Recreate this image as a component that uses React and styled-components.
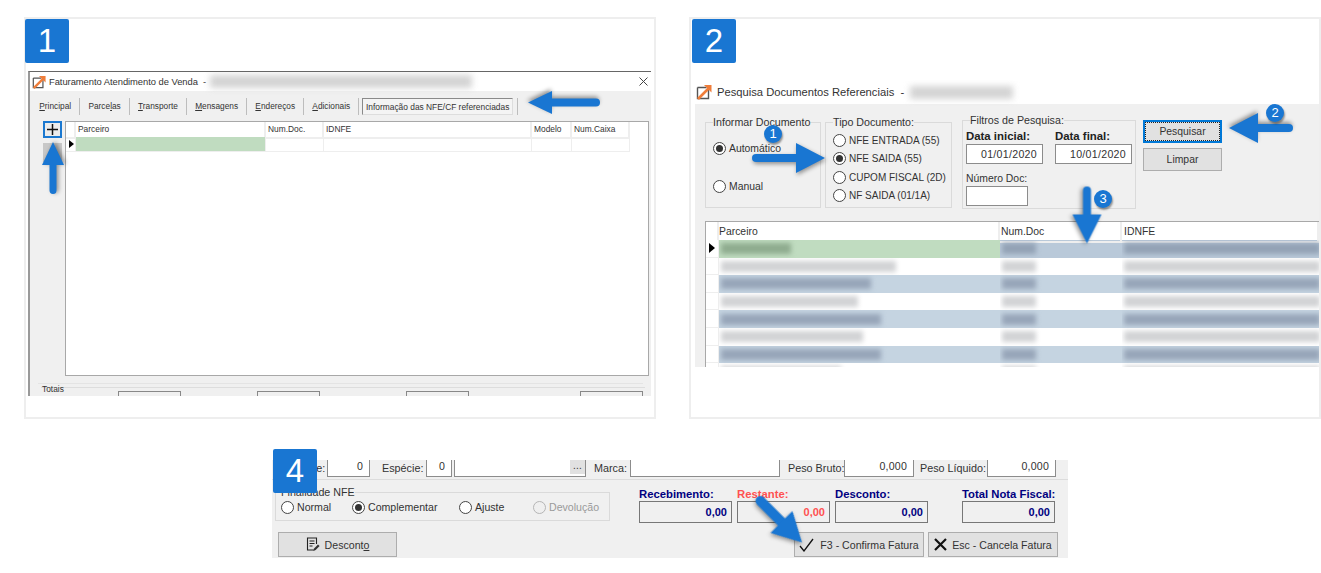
import React from "react";
import styled, { createGlobalStyle } from "styled-components";

const BLUE = "#1976d2";
const PANEL = "#f0f0f0";

const GlobalStyle = createGlobalStyle`
  html, body { margin: 0; padding: 0; background: #fff; }
  body { font-family: "Liberation Sans", Arial, sans-serif; color: #222; overflow: hidden; }
`;

const Page = styled.div`
  position: relative;
  width: 1321px;
  height: 573px;
  overflow: hidden;
  padding: 17px 0 0 24px;
  box-sizing: border-box;
`;

const TopRow = styled.div`
  display: flex;
  gap: 33px;
`;

const Panel = styled.section`
  position: relative;
  box-sizing: border-box;
  width: ${(p) => p.$width}px;
  height: 402px;
  border: 2px solid #eeeeee;
  padding-top: ${(p) => p.$top}px;
  padding-left: ${(p) => p.$left}px;
`;

const Badge = styled.div`
  position: absolute;
  left: ${(p) => p.$x}px;
  top: ${(p) => p.$y}px;
  width: 44px;
  height: 44px;
  background: ${BLUE};
  border-radius: 2px;
  color: #fff;
  font-size: 33px;
  line-height: 44px;
  text-align: center;
  z-index: 3;
`;

const Screen = styled.div`
  box-sizing: border-box;
  width: ${(p) => p.$w}px;
  height: ${(p) => p.$h}px;
  overflow: hidden;
  background: ${PANEL};
  border-top: ${(p) => (p.$framed ? "1px solid #666" : "0")};
  border-left: ${(p) => (p.$framed ? "2px solid #999" : "0")};
`;

const TitleBar = styled.div`
  display: flex;
  align-items: center;
  height: ${(p) => p.$h}px;
  background: #fff;
  padding-left: ${(p) => p.$pad}px;
  gap: ${(p) => p.$gap}px;
  font-size: ${(p) => p.$size}px;
  letter-spacing: ${(p) => p.$track || 0}px;
  color: #333;
  white-space: nowrap;
`;

const BlurTitle = styled.div`
  width: ${(p) => p.$w}px;
  height: 13px;
  margin-left: 1px;
  background: #d4d4d4;
  filter: blur(3px);
`;

const CloseMark = styled.svg`
  margin-left: auto;
  margin-right: 3px;
  width: 9px;
  height: 9px;
`;

const Tabs = styled.div`
  display: flex;
  align-items: center;
  height: 30px;
  padding: 0 0 0 1px;
`;

const Tab = styled.div`
  height: 17px;
  padding: 0 8px 0 8.3px;
  line-height: 17px;
  font-size: 8.3px;
  color: #333;
  border-right: 1px solid #bdbdbd;
  white-space: nowrap;
  u { text-decoration: underline; }
`;

const ActiveTab = styled.div`
  box-sizing: border-box;
  height: 17px;
  width: 151px;
  margin-left: 3px;
  margin-right: 4px;
  border: 1px solid #8a8a8a;
  border-right-color: #ddd;
  border-bottom-color: #ddd;
  background: #f4f4f4;
  font-size: 8.4px;
  line-height: 16px;
  text-align: center;
  color: #333;
  white-space: nowrap;
`;

const TabEnd = styled.div`
  width: 1px;
  height: 17px;
  background: #bdbdbd;
`;

const WindowBody = styled.div`
  display: flex;
  align-items: flex-start;
  padding-left: 13px;
`;

const ToolColumn = styled.div`
  display: flex;
  flex-direction: column;
  gap: 5px;
  width: 19px;
  margin-right: 3px;
`;

const PlusButton = styled.div`
  box-sizing: border-box;
  height: 17px;
  border: 2px solid #1b78d0;
  background: #ececec;
  display: flex;
  align-items: center;
  justify-content: center;
`;

const GreyTool = styled.div`
  height: 19px;
  background: #c8c8c8;
`;

const TableFrame = styled.div`
  box-sizing: border-box;
  width: ${(p) => p.$w}px;
  height: ${(p) => p.$h}px;
  background: #fff;
  border: 1px solid #a8a8a8;
  border-width: ${(p) => p.$borders || "1px"};
  overflow: hidden;
`;

const DataRow = styled.div`
  display: grid;
  grid-template-columns: ${(p) => p.$cols};
  height: ${(p) => p.$h}px;
  background: ${(p) => p.$bg || "#fff"};
`;

const HeadCell = styled.div`
  font-size: ${(p) => p.$size}px;
  line-height: ${(p) => p.$line}px;
  padding-left: ${(p) => p.$pad}px;
  color: #333;
  white-space: nowrap;
  border-right: 2px solid #eeeeee;
  border-bottom: 2px solid #eeeeee;
`;

const Cell = styled.div`
  box-sizing: border-box;
  display: flex;
  align-items: center;
  background: ${(p) => p.$bg || "transparent"};
  border-right: ${(p) => (p.$plain ? "0" : "1px solid #eeeeee")};
  border-bottom: ${(p) => (p.$plain ? "0" : "1px solid #eeeeee")};
  overflow: hidden;
`;

const Marker = styled.div`
  width: 0;
  height: 0;
  margin-left: ${(p) => p.$left}px;
  border-top: ${(p) => p.$high / 2}px solid transparent;
  border-bottom: ${(p) => p.$high / 2}px solid transparent;
  border-left: ${(p) => p.$wide}px solid #000;
`;

const Smudge = styled.div`
  width: ${(p) => p.$w}px;
  height: 11px;
  flex: none;
  margin-left: 2px;
  background: ${(p) => p.$color};
  filter: blur(2.5px);
`;

const Rule = styled.div`
  height: 1px;
  margin: ${(p) => p.$margin};
  background: #e4e4e4;
`;

const TotalsGroup = styled.div`
  margin: 3px 6px 0 11px;
  border-top: 1px solid #ddd;
`;

const TotalsLegend = styled.div`
  font-size: 8.4px;
  line-height: 10px;
  margin-top: -4px;
  padding-left: 1px;
  color: #333;
`;

const TotalsBoxes = styled.div`
  display: flex;
  margin-top: -3px;
`;

const TotalsBox = styled.div`
  box-sizing: border-box;
  width: 63px;
  height: 12px;
  margin-left: ${(p) => p.$gap}px;
  border: 1px solid #888;
`;

const TitleIcon = ({ size }) => (
  <svg width={size} height={size} viewBox="0 0 16 16">
    <path d="M1.5 3.5h9M1.5 3.5v11h11v-9" fill="none" stroke="#555" strokeWidth="1.4" />
    <path d="M2 15L14 3" stroke="#ef7d3a" strokeWidth="2.6" />
    <path d="M8 1h7.5v7.5z" fill="#ef7d3a" />
  </svg>
);

const SearchForm = styled.div`
  display: flex;
  align-items: flex-start;
  height: 117px;
  padding: 12px 0 0 10px;
  box-sizing: border-box;
`;

const Group = styled.fieldset`
  box-sizing: border-box;
  margin: ${(p) => p.$margin || "0"};
  width: ${(p) => p.$w}px;
  height: ${(p) => p.$h}px;
  padding: 0 0 0 7px;
  border: 1px solid #dadada;
  min-width: 0;
`;

const Legend = styled.legend`
  padding: 0;
  font-size: 10.7px;
  line-height: 12px;
  color: #333;
  white-space: nowrap;
`;

const RadioStack = styled.div`
  display: flex;
  flex-direction: column;
  gap: ${(p) => p.$gap}px;
  padding-top: ${(p) => p.$top}px;
`;

const RadioRow = styled.label`
  display: flex;
  align-items: center;
  gap: 3px;
  height: 13px;
  font-size: ${(p) => p.$size || 10.4}px;
  line-height: 13px;
  color: ${(p) => (p.$off ? "#9a9a9a" : "#333")};
  white-space: nowrap;
`;

const RadioDot = styled.span`
  box-sizing: border-box;
  flex: none;
  width: 13px;
  height: 13px;
  border-radius: 50%;
  border: 1px solid ${(p) => (p.$off ? "#b5b5b5" : "#444")};
  background: ${(p) => (p.$off ? "#efefef" : "#fff")};
  display: flex;
  align-items: center;
  justify-content: center;
  &::after {
    content: "";
    display: ${(p) => (p.$on ? "block" : "none")};
    width: 7px;
    height: 7px;
    border-radius: 50%;
    background: #333;
  }
`;

const FilterGrid = styled.div`
  display: grid;
  grid-template-columns: 77px 77px;
  column-gap: 12px;
  margin-left: -4px;
  margin-top: 4px;
`;

const FieldLabel = styled.div`
  font-size: ${(p) => (p.$bold ? 11.4 : 10.4)}px;
  font-weight: ${(p) => (p.$bold ? 700 : 400)};
  line-height: 13px;
  color: ${(p) => (p.$bold ? "#222" : "#333")};
  margin-top: ${(p) => p.$top || 0}px;
  margin-bottom: 1px;
  white-space: nowrap;
`;

const DateInput = styled.div`
  box-sizing: border-box;
  width: ${(p) => p.$w}px;
  height: ${(p) => p.$h}px;
  background: #fff;
  border: 1px solid #8c8c8c;
  padding-right: 5px;
  font-size: 10.6px;
  line-height: 18px;
  letter-spacing: 0.3px;
  text-align: right;
  color: #333;
`;

const NumberField = styled.div`
  grid-column: 1 / span 2;
`;

const ButtonColumn = styled.div`
  display: flex;
  flex-direction: column;
  gap: 5px;
  margin-left: 7px;
  margin-top: 4px;
`;

const WinButton = styled.div`
  box-sizing: border-box;
  width: ${(p) => p.$w}px;
  height: ${(p) => p.$h}px;
  display: flex;
  align-items: center;
  justify-content: center;
  gap: ${(p) => p.$gap || 0}px;
  background: #e1e1e1;
  border: ${(p) => (p.$focus ? `2px solid #0078d7` : "1px solid #adadad")};
  outline: ${(p) => (p.$focus ? "1px dotted #222" : "none")};
  outline-offset: -3px;
  font-size: ${(p) => p.$size || 10.4}px;
  color: #333;
  white-space: nowrap;
  flex: none;
`;

const GridWrap = styled.div`
  margin-left: 10px;
`;

const Strip = styled.section`
  position: relative;
  box-sizing: border-box;
  width: 796px;
  height: 98px;
  margin: 41px 0 0 248px;
  background: ${PANEL};
  overflow: hidden;
`;

const FieldRow = styled.div`
  display: flex;
  align-items: flex-start;
  height: 19px;
  padding-left: 25px;
  border-bottom: 1px solid #dcdcdc;
  color: #333;
`;

const ClipInput = styled.div`
  box-sizing: border-box;
  position: relative;
  width: ${(p) => p.$w}px;
  height: 17px;
  flex: none;
  margin-left: ${(p) => p.$left || 0}px;
  background: #fff;
  border: 1px solid #8c8c8c;
  border-top: 0;
  padding-right: ${(p) => p.$pad || 6}px;
  font-size: 10.6px;
  line-height: 12px;
  text-align: right;
  letter-spacing: 0.2px;
`;

const EllipsisButton = styled.div`
  position: absolute;
  right: 0;
  top: 0;
  width: 15px;
  height: 14px;
  background: #e1e1e1;
  font-size: 10px;
  line-height: 12px;
  text-align: center;
`;

const FieldText = styled.div`
  flex: none;
  width: ${(p) => p.$w}px;
  margin-left: ${(p) => p.$left || 0}px;
  line-height: 17px;
  white-space: nowrap;
  font-size: 10.8px;
`;

const MidRow = styled.div`
  display: flex;
  align-items: flex-start;
  padding: 6px 0 0 3px;
  height: 51px;
  box-sizing: border-box;
`;

const NfeGroup = styled.fieldset`
  box-sizing: border-box;
  width: 335px;
  height: 35px;
  margin: 0;
  padding: 3px 0 0 5px;
  border: 1px solid #dadada;
  min-width: 0;
  display: block;
`;

const RadioLine = styled.div`
  display: flex;
  align-items: center;
`;

const NfeOption = styled.div`
  width: ${(p) => p.$w}px;
`;

const Totals = styled.div`
  display: flex;
  align-items: flex-start;
  gap: 5px;
  margin-left: 29px;
  padding-top: 2px;
`;

const TotalColumn = styled.div`
  display: flex;
  flex-direction: column;
  margin-left: ${(p) => p.$left || 0}px;
  width: 93px;
`;

const TotalLabel = styled.div`
  font-size: 11.3px;
  font-weight: 700;
  line-height: 13px;
  color: ${(p) => (p.$red ? "#ff5050" : "#000080")};
  white-space: nowrap;
`;

const TotalValue = styled.div`
  box-sizing: border-box;
  height: 22px;
  border: 1px solid #777;
  padding-right: 4px;
  font-size: 11px;
  font-weight: 700;
  line-height: 20px;
  text-align: right;
  color: ${(p) => (p.$red ? "#ff5050" : "#000080")};
`;

const ActionRow = styled.div`
  display: flex;
  padding: 1px 10px 0 6px;
  gap: 4px;
`;

const PushRight = styled.div`
  margin-left: auto;
`;

const ArrowShape = styled.svg`
  position: absolute;
  left: ${(p) => p.$x}px;
  top: ${(p) => p.$y}px;
  transform-origin: 0 50%;
  transform: rotate(${(p) => p.$angle}deg);
  overflow: visible;
  z-index: 4;
  filter: drop-shadow(1px 2px 2px rgba(0, 0, 0, 0.4));
`;

const Arrow = ({ from, to, head, wide, thick }) => {
  const dx = to[0] - from[0];
  const dy = to[1] - from[1];
  const len = Math.hypot(dx, dy);
  const angle = (Math.atan2(dy, dx) * 180) / Math.PI;
  const mid = wide / 2;
  return (
    <ArrowShape
      $x={from[0]}
      $y={from[1] - mid}
      $angle={angle}
      width={len}
      height={wide}
      viewBox={`0 0 ${len} ${wide}`}
    >
      <path d={`M${thick / 2} ${mid}H${len - head}`} stroke={BLUE} strokeWidth={thick} strokeLinecap="round" />
      <path d={`M${len - head} 0L${len} ${mid}L${len - head} ${wide}z`} fill={BLUE} />
    </ArrowShape>
  );
};

const Step = styled.div`
  position: absolute;
  left: ${(p) => p.$x - 9}px;
  top: ${(p) => p.$y - 9}px;
  width: 18px;
  height: 18px;
  border-radius: 50%;
  background: ${BLUE};
  color: #fff;
  font-size: 13px;
  line-height: 18px;
  text-align: center;
  z-index: 5;
  box-shadow: 1px 2px 2px rgba(0, 0, 0, 0.4);
`;

const topCols = "10px 190px 58px 208px 40px 58px";
const searchCols = "13px 281px 122px 1fr";

const searchRows = [
  { bg: "#b9c9d9", first: "#c0dcc0", ink: "#93a2b5", firstInk: "#8fac8f", w: 70 },
  { bg: "#ffffff", ink: "#d2d3d5", w: 175 },
  { bg: "#c5d4e1", ink: "#97a5b9", w: 150 },
  { bg: "#ffffff", ink: "#d2d3d5", w: 137 },
  { bg: "#c5d4e1", ink: "#97a5b9", w: 160 },
  { bg: "#ffffff", ink: "#d2d3d5", w: 142 },
  { bg: "#c5d4e1", ink: "#97a5b9", w: 160 },
  { bg: "#ffffff", ink: "#d2d3d5", w: 120 },
];

const Radio = ({ label, on, off, size }) => (
  <RadioRow $off={off} $size={size}>
    <RadioDot $on={on} $off={off} />
    {label}
  </RadioRow>
);

export default function App() {
  return (
    <Page>
      <GlobalStyle />
      <TopRow>
        <Panel $width={632} $top={52} $left={2}>
          <Badge $x={-1} $y={0}>1</Badge>
          <Screen $w={623} $h={325} $framed>
            <TitleBar $h={19} $pad={2} $gap={3} $size={9.4} $track={-0.04}>
              <TitleIcon size={14} />
              <span>Faturamento Atendimento de Venda&nbsp; -</span>
              <BlurTitle $w={262} />
              <CloseMark viewBox="0 0 9 9">
                <path d="M0.5 0.5L8.5 8.5M8.5 0.5L0.5 8.5" stroke="#444" strokeWidth="1" />
              </CloseMark>
            </TitleBar>
            <Tabs>
              <Tab><u>P</u>rincipal</Tab>
              <Tab>Parce<u>l</u>as</Tab>
              <Tab><u>T</u>ransporte</Tab>
              <Tab><u>M</u>ensagens</Tab>
              <Tab><u>E</u>ndereços</Tab>
              <Tab><u>A</u>dicionais</Tab>
              <ActiveTab>Informação das NFE/CF referenciadas</ActiveTab>
              <TabEnd />
            </Tabs>
            <WindowBody>
              <ToolColumn>
                <PlusButton>
                  <svg width="11" height="11" viewBox="0 0 11 11">
                    <path d="M5.5 0V11M0 5.5H11" stroke="#111" strokeWidth="1.5" />
                  </svg>
                </PlusButton>
                <GreyTool />
              </ToolColumn>
              <TableFrame $w={584} $h={255}>
                <DataRow $cols={topCols} $h={15}>
                  <HeadCell $size={8.4} $line={15} $pad={2} />
                  <HeadCell $size={8.4} $line={15} $pad={2}>Parceiro</HeadCell>
                  <HeadCell $size={8.4} $line={15} $pad={2}>Num.Doc.</HeadCell>
                  <HeadCell $size={8.4} $line={15} $pad={2}>IDNFE</HeadCell>
                  <HeadCell $size={8.4} $line={15} $pad={2}>Modelo</HeadCell>
                  <HeadCell $size={8.4} $line={15} $pad={2}>Num.Caixa</HeadCell>
                </DataRow>
                <DataRow $cols={topCols} $h={15}>
                  <Cell><Marker $left={3} $wide={5} $high={9} /></Cell>
                  <Cell $bg="#c0dcc0" />
                  <Cell />
                  <Cell />
                  <Cell />
                  <Cell />
                </DataRow>
              </TableFrame>
            </WindowBody>
            <Rule $margin="7px 8px 0 8px" />
            <TotalsGroup>
              <TotalsLegend>Totais</TotalsLegend>
              <TotalsBoxes>
                <TotalsBox $gap={77} />
                <TotalsBox $gap={76} />
                <TotalsBox $gap={86} />
                <TotalsBox $gap={111} />
              </TotalsBoxes>
            </TotalsGroup>
          </Screen>
        </Panel>

        <Panel $width={632} $top={61} $left={4}>
          <Badge $x={1} $y={0}>2</Badge>
          <Screen $w={624} $h={287}>
            <TitleBar $h={24} $pad={1} $gap={5} $size={11.2}>
              <TitleIcon size={16} />
              <span>Pesquisa Documentos Referenciais&nbsp; -</span>
              <BlurTitle $w={103} />
            </TitleBar>
            <SearchForm>
              <Group $w={116} $h={92}>
                <Legend>Informar Documento</Legend>
                <RadioStack $gap={25} $top={14}>
                  <Radio label="Automático" on />
                  <Radio label="Manual" />
                </RadioStack>
              </Group>
              <Group $w={127} $h={92} $margin="0 0 0 4px">
                <Legend>Tipo Documento:</Legend>
                <RadioStack $gap={5.3} $top={6}>
                  <Radio label="NFE ENTRADA (55)" size={10} />
                  <Radio label="NFE SAIDA (55)" on size={10} />
                  <Radio label="CUPOM FISCAL (2D)" size={10} />
                  <Radio label="NF SAIDA (01/1A)" size={10} />
                </RadioStack>
              </Group>
              <Group $w={174} $h={95} $margin="-2px 0 0 10px">
                <Legend>Filtros de Pesquisa:</Legend>
                <FilterGrid>
                  <div>
                    <FieldLabel $bold>Data inicial:</FieldLabel>
                    <DateInput $w={77} $h={20}>01/01/2020</DateInput>
                  </div>
                  <div>
                    <FieldLabel $bold>Data final:</FieldLabel>
                    <DateInput $w={77} $h={20}>10/01/2020</DateInput>
                  </div>
                  <NumberField>
                    <FieldLabel $top={8}>Número Doc:</FieldLabel>
                    <DateInput $w={62} $h={20} />
                  </NumberField>
                </FilterGrid>
              </Group>
              <ButtonColumn>
                <WinButton $w={79} $h={23} $focus>Pesquisar</WinButton>
                <WinButton $w={79} $h={23}>Limpar</WinButton>
              </ButtonColumn>
            </SearchForm>
            <GridWrap>
              <TableFrame $w={614} $h={146} $borders="1px 0 0 1px">
                <DataRow $cols={searchCols} $h={18}>
                  <HeadCell $size={10.4} $line={19} $pad={0} />
                  <HeadCell $size={10.4} $line={19} $pad={0}>Parceiro</HeadCell>
                  <HeadCell $size={10.4} $line={19} $pad={1}>Num.Doc</HeadCell>
                  <HeadCell $size={10.4} $line={19} $pad={2}>IDNFE</HeadCell>
                </DataRow>
                {searchRows.map((row, i) => (
                  <DataRow key={i} $cols={searchCols} $h={17.6} $bg={row.bg}>
                    <Cell $bg="#fff">{i === 0 && <Marker $left={3} $wide={6} $high={11} />}</Cell>
                    <Cell $plain $bg={row.first}>
                      <Smudge $w={row.w} $color={row.firstInk || row.ink} />
                    </Cell>
                    <Cell $plain>
                      <Smudge $w={34} $color={row.ink} />
                    </Cell>
                    <Cell $plain>
                      <Smudge $w={196} $color={row.ink} />
                    </Cell>
                  </DataRow>
                ))}
              </TableFrame>
            </GridWrap>
          </Screen>
        </Panel>
      </TopRow>

      <Strip>
        <FieldRow>
          <FieldText $w={30}>Série:</FieldText>
          <ClipInput $w={43}>0</ClipInput>
          <FieldText $left={12} $w={41}>Espécie:</FieldText>
          <ClipInput $w={26} $left={3} $pad={6}>0</ClipInput>
          <ClipInput $w={132} $left={2}>
            <EllipsisButton>...</EllipsisButton>
          </ClipInput>
          <FieldText $left={8} $w={33}>Marca:</FieldText>
          <ClipInput $w={150} $left={3} />
          <FieldText $left={8} $w={56}>Peso Bruto:</FieldText>
          <ClipInput $w={70}>0,000</ClipInput>
          <FieldText $left={6} $w={64}>Peso Líquido:</FieldText>
          <ClipInput $w={69} $left={3}>0,000</ClipInput>
        </FieldRow>
        <MidRow>
          <NfeGroup>
            <Legend>Finalidade NFE</Legend>
            <RadioLine>
              <NfeOption $w={71}><Radio label="Normal" size={10.6} /></NfeOption>
              <NfeOption $w={107}><Radio label="Complementar" on size={10.6} /></NfeOption>
              <NfeOption $w={74}><Radio label="Ajuste" size={10.6} /></NfeOption>
              <NfeOption $w={75}><Radio label="Devolução" off size={10.6} /></NfeOption>
            </RadioLine>
          </NfeGroup>
          <Totals>
            <TotalColumn>
              <TotalLabel>Recebimento:</TotalLabel>
              <TotalValue>0,00</TotalValue>
            </TotalColumn>
            <TotalColumn>
              <TotalLabel $red>Restante:</TotalLabel>
              <TotalValue $red>0,00</TotalValue>
            </TotalColumn>
            <TotalColumn>
              <TotalLabel>Desconto:</TotalLabel>
              <TotalValue>0,00</TotalValue>
            </TotalColumn>
            <TotalColumn $left={29}>
              <TotalLabel>Total Nota Fiscal:</TotalLabel>
              <TotalValue>0,00</TotalValue>
            </TotalColumn>
          </Totals>
        </MidRow>
        <ActionRow>
          <WinButton $w={119} $h={25} $gap={5} $size={10.6}>
            <svg width="14" height="15" viewBox="0 0 14 15">
              <path d="M8 13H1.5V1H10.5V7" fill="none" stroke="#222" strokeWidth="1.1" />
              <path d="M3.5 4H8.5M3.5 6.5H8.5M3.5 9H6.5" stroke="#222" strokeWidth="1" />
              <path d="M7.5 14l.6-2.5L12 7.5l1.6 1.6-4 4z" fill="#333" />
            </svg>
            <span>Descont<u>o</u></span>
          </WinButton>
          <PushRight />
          <WinButton $w={130} $h={25} $gap={6} $size={10.6}>
            <svg width="15" height="14" viewBox="0 0 15 14">
              <path d="M1 8L5 13L14 1" fill="none" stroke="#111" strokeWidth="1.3" />
            </svg>
            <span>F3 - Confirma Fatura</span>
          </WinButton>
          <WinButton $w={130} $h={25} $gap={5} $size={10.6}>
            <svg width="13" height="13" viewBox="0 0 13 13">
              <path d="M1 1L12 12M12 1L1 12" stroke="#111" strokeWidth="2.2" />
            </svg>
            <span>Esc - Cancela Fatura</span>
          </WinButton>
        </ActionRow>
      </Strip>
      <Badge $x={273} $y={449}>4</Badge>

      <Arrow from={[600, 102]} to={[528, 102]} head={24} wide={23} thick={8} />
      <Arrow from={[53, 194]} to={[53, 142]} head={23} wide={22} thick={7} />
      <Arrow from={[752, 158]} to={[825, 158]} head={29} wide={30} thick={8} />
      <Arrow from={[1293, 128]} to={[1229, 128]} head={29} wide={30} thick={8} />
      <Arrow from={[1087, 186]} to={[1087, 243]} head={29} wide={29} thick={8} />
      <Arrow from={[757, 497]} to={[802, 542]} head={29} wide={31} thick={10} />
      <Step $x={773} $y={134}>1</Step>
      <Step $x={1275} $y={113}>2</Step>
      <Step $x={1103} $y={199}>3</Step>
    </Page>
  );
}
